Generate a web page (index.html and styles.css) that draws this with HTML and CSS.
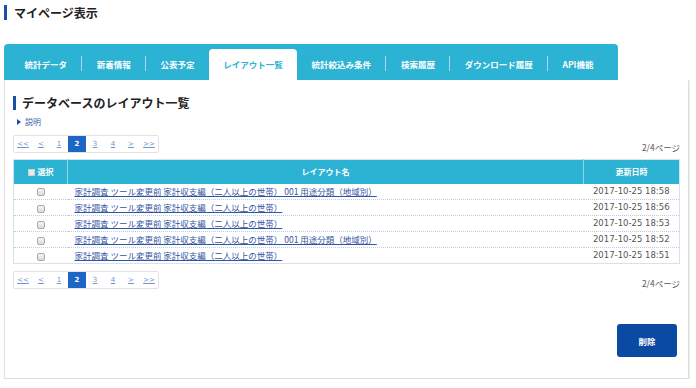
FILE: index.html
```html
<!DOCTYPE html>
<html lang="ja">
<head>
<meta charset="utf-8">
<title>マイページ表示</title>
<link rel="stylesheet" href="styles.css">
</head>
<body>
<h1 class="page-title">マイページ表示</h1>

<nav class="tabs">
  <a class="tab">統計データ</a>
  <span class="sep"></span>
  <a class="tab">新着情報</a>
  <span class="sep"></span>
  <a class="tab">公表予定</a>
  <a class="tab active">レイアウト一覧</a>
  <a class="tab">統計絞込み条件</a>
  <span class="sep"></span>
  <a class="tab">検索履歴</a>
  <span class="sep"></span>
  <a class="tab">ダウンロード履歴</a>
  <span class="sep"></span>
  <a class="tab">API機能</a>
</nav>

<section class="panel">
  <h2 class="heading">データベースのレイアウト一覧</h2>
  <div class="desc"><span class="tri"></span><a>説明</a></div>

  <div class="pager-row">
    <div class="pager">
      <a>&lt;&lt;</a><a>&lt;</a><a>1</a><span class="cur">2</span><a>3</a><a>4</a><a>&gt;</a><a>&gt;&gt;</a>
    </div>
    <span class="count">2/4ページ</span>
  </div>

  <table class="list">
    <colgroup><col class="c1"><col><col class="c3"></colgroup>
    <thead>
      <tr><th><span class="hbox"></span>選択</th><th>レイアウト名</th><th>更新日時</th></tr>
    </thead>
    <tbody>
      <tr><td class="chk"><input type="checkbox"></td><td class="name"><a>家計調査 ツール変更前 家計収支編（二人以上の世帯） 001 用途分類（地域別）</a></td><td class="date">2017-10-25 18:58</td></tr>
      <tr><td class="chk"><input type="checkbox"></td><td class="name"><a>家計調査 ツール変更前 家計収支編（二人以上の世帯）</a></td><td class="date">2017-10-25 18:56</td></tr>
      <tr><td class="chk"><input type="checkbox"></td><td class="name"><a>家計調査 ツール変更前 家計収支編（二人以上の世帯）</a></td><td class="date">2017-10-25 18:53</td></tr>
      <tr><td class="chk"><input type="checkbox"></td><td class="name"><a>家計調査 ツール変更前 家計収支編（二人以上の世帯） 001 用途分類（地域別）</a></td><td class="date">2017-10-25 18:52</td></tr>
      <tr><td class="chk"><input type="checkbox"></td><td class="name"><a>家計調査 ツール変更前 家計収支編（二人以上の世帯）</a></td><td class="date">2017-10-25 18:51</td></tr>
    </tbody>
  </table>

  <div class="pager-row bottom">
    <div class="pager">
      <a>&lt;&lt;</a><a>&lt;</a><a>1</a><span class="cur">2</span><a>3</a><a>4</a><a>&gt;</a><a>&gt;&gt;</a>
    </div>
    <span class="count">2/4ページ</span>
  </div>

  <div class="actions">
    <button class="btn-delete">削除</button>
  </div>
</section>
</body>
</html>
```

FILE: styles.css
```css
* { box-sizing: border-box; }
body {
  margin: 0;
  background: #fff;
  font-family: "Noto Sans CJK JP", "Noto Sans", sans-serif;
  color: #333;
  width: 696px;
}
a { cursor: pointer; }

.page-title {
  margin: 5px 0 0 4px;
  padding-left: 7px;
  border-left: 3px solid #1c4fa3;
  font-size: 12px;
  line-height: 15px;
  height: 15px;
  font-weight: bold;
  color: #222;
}

.tabs {
  margin: 24px 0 0 4px;
  width: 614px;
  height: 36px;
  background: #2cb3d4;
  border-radius: 4px 4px 0 0;
  display: flex;
  align-items: flex-end;
  padding-left: 6px;
}
.tab {
  height: 31px;
  line-height: 31px;
  padding: 0 14.4px;
  font-size: 8.5px;
  font-weight: bold;
  color: #fff;
  white-space: nowrap;
}
.tab.active {
  background: #fff;
  color: #2cb3d4;
  border-radius: 4px 4px 0 0;
}
.sep {
  width: 1px;
  height: 15px;
  margin-bottom: 9px;
  background: rgba(255,255,255,0.55);
}

.panel {
  margin-left: 4px;
  width: 685px;
  border: 1px solid #dedede;
  border-top: none;
  box-shadow: 1px 1px 0 #ececec;
  padding: 16px 8px 21px 8px;
}

.heading {
  margin: 0;
  height: 14px;
  line-height: 14px;
  border-left: 3px solid #1c4fa3;
  padding-left: 6px;
  font-size: 12px;
  font-weight: bold;
  color: #222;
}

.desc {
  margin-top: 6px;
  height: 12px;
  line-height: 12px;
  font-size: 8px;
  display: flex;
  align-items: center;
  padding-left: 4px;
}
.desc a { color: #3b64a8; margin-left: 4px; }
.tri {
  width: 0; height: 0;
  border-left: 4px solid #1c4fa3;
  border-top: 3px solid transparent;
  border-bottom: 3px solid transparent;
}

.pager-row {
  margin-top: 7px;
  display: flex;
  justify-content: space-between;
  align-items: flex-end;
}
.pager {
  display: flex;
  border: 1px solid #e3e3e3;
  border-radius: 2px;
  height: 18px;
}
.pager a, .pager .cur {
  width: 18px;
  height: 16px;
  line-height: 16px;
  text-align: center;
  font-family: "DejaVu Sans", sans-serif;
  font-size: 7px;
  color: #6f96cc;
  text-decoration: underline;
}
.pager .cur {
  background: #1d66c6;
  color: #fff;
  font-weight: bold;
  text-decoration: none;
}
.count {
  font-size: 8.5px;
  color: #555;
  line-height: 12px;
}

.list {
  margin-top: 6px;
  width: 667px;
  border-collapse: collapse;
  table-layout: fixed;
  border: 1px solid #d3e4ef;
}
.list col.c1 { width: 54px; }
.list col.c3 { width: 96px; }
.list th {
  height: 24px;
  background: #2cb3d4;
  color: #fff;
  font-size: 8px;
  font-weight: bold;
  text-align: center;
  padding: 0;
  border-left: 1px solid #8fd3e6;
}
.list th:first-child { border-left: none; }
.hbox {
  display: inline-block;
  width: 7px;
  height: 7px;
  background: #e9e9e9;
  border: 1px solid #cfcfcf;
  margin-right: 3px;
  vertical-align: -1px;
}
.list td {
  height: 16px;
  padding: 0;
  border-top: 1px dotted #b9cfe8;
  font-size: 8.5px;
  line-height: 15px;
}
.list tbody tr:first-child td { border-top: none; }
.chk { text-align: center; }
.chk input {
  appearance: none;
  -webkit-appearance: none;
  width: 8px;
  height: 8px;
  margin: 0;
  border: 1px solid #a9a9a9;
  border-radius: 2px;
  background: linear-gradient(#f4f4f4, #dcdcdc);
  vertical-align: middle;
}
.list td.name { padding-left: 7px; white-space: nowrap; }
.name a { color: #34549f; text-decoration: underline; }
.list td.date {
  text-align: center;
  font-family: "DejaVu Sans", sans-serif;
  color: #555;
  font-size: 8.5px;
}

.actions {
  margin-top: 35px;
  display: flex;
  justify-content: flex-end;
  padding-right: 3px;
}
.btn-delete {
  width: 60px;
  height: 33px;
  border: none;
  border-radius: 3px;
  background: #0b4aa2;
  color: #fff;
  font-family: "Noto Sans CJK JP", sans-serif;
  font-size: 8.5px;
  font-weight: bold;
}
```
